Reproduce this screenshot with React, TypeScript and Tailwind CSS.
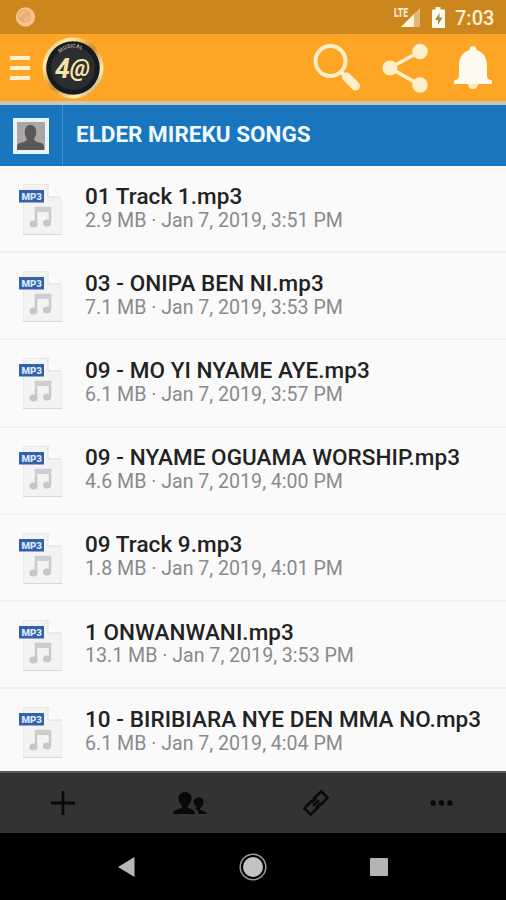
const tracks = [
  { name: "01 Track 1.mp3", info: "2.9 MB · Jan 7, 2019, 3:51 PM" },
  { name: "03 - ONIPA BEN NI.mp3", info: "7.1 MB · Jan 7, 2019, 3:53 PM" },
  { name: "09 - MO YI NYAME AYE.mp3", info: "6.1 MB · Jan 7, 2019, 3:57 PM" },
  { name: "09 - NYAME OGUAMA WORSHIP.mp3", info: "4.6 MB · Jan 7, 2019, 4:00 PM" },
  { name: "09 Track 9.mp3", info: "1.8 MB · Jan 7, 2019, 4:01 PM" },
  { name: "1 ONWANWANI.mp3", info: "13.1 MB · Jan 7, 2019, 3:53 PM" },
  { name: "10 - BIRIBIARA NYE DEN MMA NO.mp3", info: "6.1 MB · Jan 7, 2019, 4:04 PM" },
];

function StatusBar() {
  return (
    <div className="flex h-[34px] shrink-0 items-center bg-[#cc861e] pl-[15px] pr-[11px]">
      <svg className="size-[21px]" viewBox="0 0 21 21">
        <circle cx="10.5" cy="10" r="9.7" fill="#fac58c" />
        <circle cx="9.5" cy="9" r="6.8" fill="#eab078" />
        <path d="M5 10a5 5 0 0 1 5-5M9 13a5 5 0 0 0 5-4" fill="none" stroke="#f5c08a" strokeWidth="1.3" />
      </svg>
      <svg className="ml-auto h-[24px] w-[28px]" viewBox="0 0 28 24">
        <path d="M26 3v19H7z" fill="#e2b679" />
        <path d="M20 9v13H7z" fill="#fff3dc" />
        <text x="0" y="11.5" textLength="14" lengthAdjust="spacingAndGlyphs" fill="#ffe9c9" className="font-[Roboto,sans-serif] text-[12px] font-black">LTE</text>
      </svg>
      <svg className="ml-[9px] h-[23px] w-[15px]" viewBox="0 0 15 23">
        <path d="M4.500 1h5v2.500H13a1 1 0 0 1 1 1V21a1 1 0 0 1-1 1H2a1 1 0 0 1-1-1V4.500a1 1 0 0 1 1-1h2.500z" fill="#fffaf0" />
        <path d="M8.500 7 4 14h3v5l4.500-7.500h-3z" fill="#9b9052" />
      </svg>
      <span className="ml-[9px] mt-[2px] w-[40px] whitespace-nowrap text-[20px] font-medium leading-[24px] text-[#fff1db]">7:03</span>
    </div>
  );
}

function Logo() {
  return (
    <svg className="ml-[12px] size-[62px]" viewBox="0 0 62 62">
      <defs>
        <linearGradient id="gold" x1="0" y1="0" x2="1" y2="1">
          <stop offset="0" stopColor="#d29b3b" />
          <stop offset=".23" stopColor="#fff0ad" />
          <stop offset=".5" stopColor="#cf8b24" />
          <stop offset=".75" stopColor="#fff0b5" />
          <stop offset="1" stopColor="#8d6220" />
        </linearGradient>
        <path id="arc" d="M13.500 28a17.500 17.500 0 0 1 35 0" />
      </defs>
      <circle cx="31" cy="31" r="30.500" fill="url(#gold)" />
      <circle cx="31" cy="31" r="26.800" fill="#171b20" />
      <circle cx="31" cy="31" r="22" fill="#2b2d31" />
      <text fill="#a6a095" className="font-[Roboto,sans-serif] text-[5.500px] font-bold"><textPath href="#arc" startOffset="13">MUSICAL</textPath></text>
      <text x="13" y="41" textLength="35" lengthAdjust="spacingAndGlyphs" fill="#f7e4a4" className="font-[Roboto,sans-serif] font-bold italic"><tspan className="text-[27px]">4</tspan><tspan className="text-[23px]" dy="-2">@</tspan></text>
    </svg>
  );
}

function Header() {
  return (
    <header className="flex h-[67px] shrink-0 items-center bg-[#fea526] pl-[10px] pr-[14px]">
      <div className="flex w-[20px] flex-col gap-[6px]">
        <span className="h-[4px] bg-[#fff0cf]" />
        <span className="h-[4px] bg-[#fff0cf]" />
        <span className="h-[4px] bg-[#fff0cf]" />
      </div>
      <Logo />
      <svg className="ml-auto h-[50px] w-[49px]" viewBox="0 0 49 50" fill="none" stroke="#ffefc9">
        <circle cx="17.500" cy="18" r="15" strokeWidth="4" />
        <path d="m28 29 5 5" strokeWidth="4" />
        <path d="m33.500 34 9 9" strokeWidth="9" strokeLinecap="round" />
      </svg>
      <svg className="ml-[20px] h-[50px] w-[48px]" viewBox="0 0 48 50" fill="#ffefca">
        <path d="M38 8.500 8 25l30 17" fill="none" stroke="#ffefca" strokeWidth="3.700" />
        <circle cx="38" cy="8.500" r="7.800" />
        <circle cx="8" cy="25" r="7.500" />
        <circle cx="38" cy="42" r="7.800" />
      </svg>
      <svg className="ml-[24px] h-[46px] w-[38px]" viewBox="0 0 38 46" fill="#fffaf0">
        <path d="M19 1c2 0 3.500 1.500 3.500 4 7 2 10.500 8 10.500 15v10c0 4 2 5 5 5.500V39H0v-3.500C3 35 5 34 5 30V20C5 13 8.500 7 15.500 5c0-2.500 1.500-4 3.500-4" />
        <path d="M14 39h10c0 3-2 5-5 5s-5-2-5-5" fill="#ffe8b2" />
      </svg>
    </header>
  );
}

function FolderBar() {
  return (
    <div className="flex h-[65px] shrink-0 items-center border-t-[4px] border-[#c9c8b7] bg-[#1975bd]">
      <div className="flex h-full w-[63px] items-center border-r border-[#438fca] pl-[13px]">
        <svg className="size-[36px]" viewBox="0 0 36 36">
          <path fill="#e7f4fb" d="M0 0h36v36H0z" />
          <path fill="#aaa6a6" d="M4 4h28v28H4z" />
          <path d="M4 32v-4q0-3 7-4l3-2-1-3q-2-3-1-7 1-5 5.500-5t5.500 5q1 4-1 7l-1 3 3 2q7 1 7 4v4z" fill="#5b5759" />
        </svg>
      </div>
      <h1 className="ml-[13px] mt-[-4px] whitespace-nowrap text-[22.500px] font-bold leading-[28px] text-[#eff9ff]">ELDER MIREKU SONGS</h1>
    </div>
  );
}

function Mp3Icon() {
  return (
    <svg className="ml-[18px] mt-[16px] h-[55px] w-[46px] shrink-0" viewBox="0 0 46 55">
      <path d="M5.500 2.500h25L43 15v37.500H5.500z" fill="#f3f3f3" stroke="#e9e9e9" />
      <path d="M30 2v13h13" fill="#fcfcfc" stroke="#dedede" />
      <path d="M5 52.500h39" stroke="#d9d9d9" />
      <path d="M18 42V26h14v15" fill="none" stroke="#c9c9c9" strokeWidth="2.500" />
      <path d="M17 25h16v5H17z" fill="#cecece" />
      <ellipse cx="15.500" cy="42" rx="4" ry="3.500" fill="#c7c7c7" />
      <ellipse cx="29" cy="41" rx="4" ry="3.500" fill="#c7c7c7" />
      <path d="M1 8h25v12.500H1z" fill="#3261ac" />
      <text x="3.500" y="17.500" textLength="20.500" lengthAdjust="spacingAndGlyphs" fill="#dce8fa" className="font-[Roboto,sans-serif] text-[9.500px] font-black">MP3</text>
    </svg>
  );
}

function TrackRow({ name, info }: { name: string; info: string }) {
  return (
    <li className="flex h-[87.200px] shrink-0 border-b-2 border-[#f1f1f1] last:border-0">
      <Mp3Icon />
      <div className="ml-[21px] mt-[16.700px] whitespace-nowrap">
        <p className="text-[22.500px] font-medium leading-[26px] tracking-[0.060px] text-[#222222]">{name}</p>
        <p className="mt-[-0.200px] text-[19.600px] leading-[24px] text-[#8a8a8a]">{info}</p>
      </div>
    </li>
  );
}

function Toolbar() {
  return (
    <div className="grid h-[62px] shrink-0 grid-cols-4 place-items-center border-t-2 border-[#555555] bg-[#333333] text-[#090909]">
      <svg className="size-[26px]" viewBox="0 0 26 26" fill="none" stroke="currentColor" strokeWidth="2.800"><path d="M13 1v24M1 13h24" /></svg>
      <svg className="h-[24px] w-[34px]" viewBox="0 0 34 24" fill="currentColor">
        <path d="M0 23q0-4 7-5.500l2-1v-2q-3.500-3.500-3.500-7.500c0-8 13-8 13 0q0 4-3.500 7.500v2l2 1q5 1.500 5 5.500z" />
        <path d="M20.500 11c0-6 10-6 10 0q0 4-3.500 6l.5 2q6 1 6.500 4h-8q-1-4-4-6l2-1.500q-3.500-1.500-3.500-4.500" />
      </svg>
      <svg className="size-[28px]" viewBox="0 0 28 28" fill="none" stroke="currentColor" strokeWidth="2.600" strokeLinejoin="round">
        <g transform="rotate(-45 14 14)">
          <path d="M12.500 12V9.500H2v9h10.500V16M15.500 12V9.500H26v9H15.500V16M10 14h8" />
        </g>
      </svg>
      <svg className="mr-[3px] h-[6px] w-[23px]" viewBox="0 0 23 6" fill="currentColor"><circle cx="3" cy="3" r="2.700" /><circle cx="11.500" cy="3" r="2.700" /><circle cx="20" cy="3" r="2.700" /></svg>
    </div>
  );
}

function NavigationBar() {
  return (
    <nav className="flex h-[67px] shrink-0 items-center justify-center bg-black">
      <svg className="h-[20px] w-[17px]" viewBox="0 0 17 20"><path d="M16.500 0v20L0 10z" fill="#b7b7b7" /></svg>
      <svg className="ml-[104px] size-[28px]" viewBox="0 0 28 28"><circle cx="14" cy="14" r="12.800" fill="none" stroke="#9b9b9b" strokeWidth="1.500" /><circle cx="14" cy="14" r="10" fill="#c2c2c2" /></svg>
      <div className="ml-[103px] size-[18px] rounded-[1px] bg-[#b4b4b4]" />
    </nav>
  );
}

export default function App() {
  return (
    <main className="flex h-[900px] w-[506px] flex-col overflow-hidden bg-[#fafafa] font-[Roboto,sans-serif]">
      <StatusBar />
      <Header />
      <FolderBar />
      <ul className="flex min-h-0 flex-1 flex-col overflow-hidden">
        {tracks.map((track) => <TrackRow key={track.name} {...track} />)}
      </ul>
      <Toolbar />
      <NavigationBar />
    </main>
  );
}
